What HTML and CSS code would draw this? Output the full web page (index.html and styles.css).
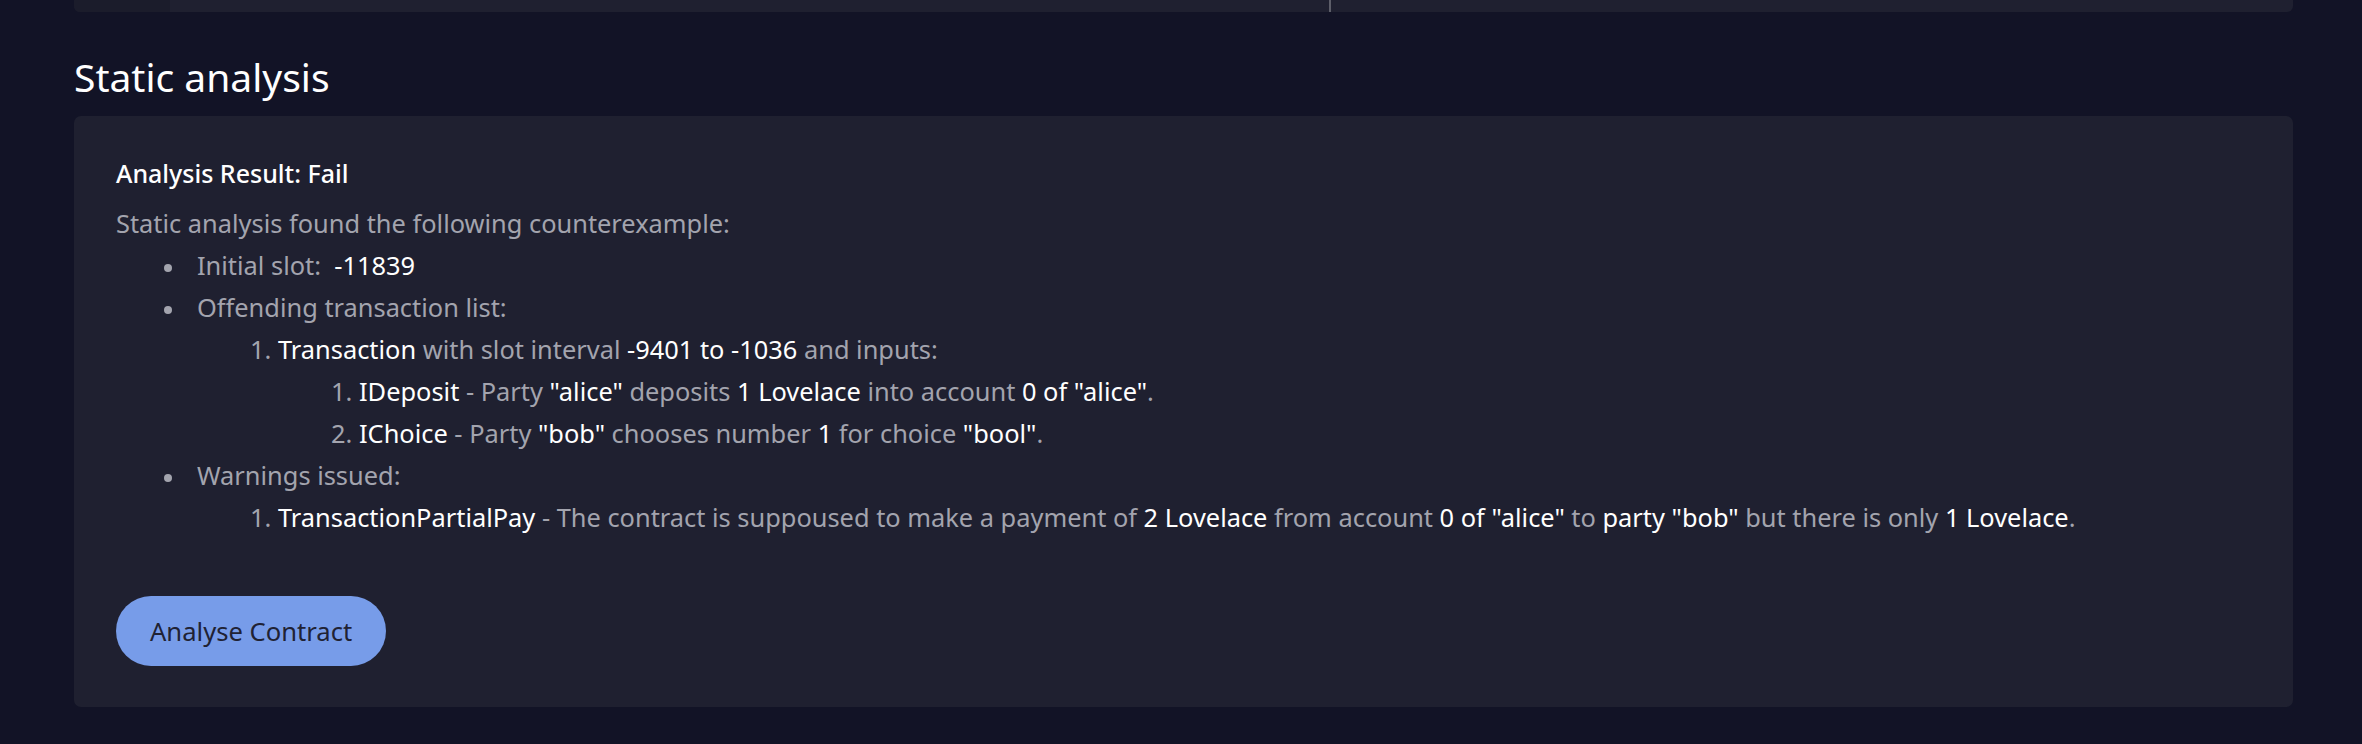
FILE: index.html
```html
<!DOCTYPE html>
<html>
<head>
<meta charset="utf-8">
<link rel="stylesheet" href="styles.css">
</head>
<body>
<div class="page">
  <div class="top-panel">
    <div class="top-gutter"></div>
    <div class="top-left"></div>
    <div class="top-right"></div>
  </div>
  <h2 class="section-title">Static analysis</h2>
  <div class="card">
    <div class="result-title">Analysis Result: Fail</div>
    <div class="muted">Static analysis found the following counterexample:</div>
    <ul class="bullets">
      <li class="bullet-item">Initial slot: &nbsp;<span class="hl">-11839</span></li>
      <li class="bullet-item">Offending transaction list:
        <ol class="numbers">
          <li><span class="hl">Transaction</span> with slot interval <span class="hl">-9401</span> <span class="hl">to</span> <span class="hl">-1036</span> and inputs:
            <ol class="numbers">
              <li><span class="hl">IDeposit</span> - Party <span class="hl">"alice"</span> deposits <span class="hl">1</span> <span class="hl">Lovelace</span> into account <span class="hl">0</span> <span class="hl">of</span> <span class="hl">"alice"</span>.</li>
              <li><span class="hl">IChoice</span> - Party <span class="hl">"bob"</span> chooses number <span class="hl">1</span> for choice <span class="hl">"bool"</span>.</li>
            </ol>
          </li>
        </ol>
      </li>
      <li class="bullet-item">Warnings issued:
        <ol class="numbers">
          <li><span class="hl">TransactionPartialPay</span> - The contract is suppoused to make a payment of <span class="hl">2</span> <span class="hl">Lovelace</span> from account <span class="hl">0</span> <span class="hl">of</span> <span class="hl">"alice"</span> to <span class="hl">party</span> <span class="hl">"bob"</span> but there is only <span class="hl">1</span> <span class="hl">Lovelace</span>.</li>
        </ol>
      </li>
    </ul>
    <button class="analyse-btn">Analyse Contract</button>
  </div>
</div>
</body>
</html>
```

FILE: styles.css
```css
html, body {
  margin: 0;
  padding: 0;
  background: #121326;
}

body {
  font-family: "Noto Sans", "Open Sans", sans-serif;
  color: #a3a4ae;
}

.page {
  padding: 0 69px 0 74px;
  height: 744px;
  box-sizing: border-box;
}

.top-panel {
  display: flex;
  height: 12px;
  background: #1f2030;
  border-radius: 0 0 6px 6px;
  overflow: hidden;
}

.top-gutter {
  width: 96px;
  background: #1b1c2b;
}

.top-left {
  width: 1159px;
  border-right: 2px solid #5d5e69;
}

.top-right {
  flex: 1;
}

.section-title {
  margin: 38px 0 13px 0;
  font-size: 39px;
  line-height: 53px;
  font-weight: 400;
  color: #ffffff;
}

.card {
  background: #1f2030;
  border-radius: 7px;
  padding: 36px 42px 41px 42px;
  font-size: 25.4px;
  line-height: 42px;
}

.result-title {
  color: #ffffff;
  font-size: 25px;
  font-weight: 500;
  margin-bottom: 8px;
}

.muted {
  color: #a3a4ae;
}

.hl {
  color: #ffffff;
}

.bullets {
  margin: 0 0 58px 0;
  padding-left: 81px;
  list-style: none;
}

.bullet-item {
  position: relative;
}

.bullet-item::before {
  content: "";
  position: absolute;
  left: -33px;
  top: 20px;
  width: 8px;
  height: 8px;
  border-radius: 50%;
  background: #a3a4ae;
}

.numbers {
  margin: 0;
  padding-left: 81px;
  list-style-type: decimal;
}

.analyse-btn {
  display: inline-flex;
  align-items: center;
  height: 70px;
  padding: 0 34px;
  border: none;
  border-radius: 35px;
  background: #779ce9;
  color: #202234;
  font-family: "Noto Sans", "Open Sans", sans-serif;
  font-size: 25.6px;
}
```
